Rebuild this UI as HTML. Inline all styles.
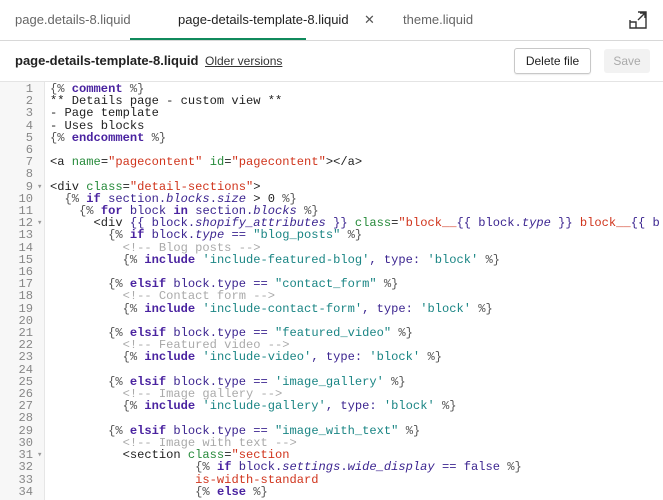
<!DOCTYPE html>
<html><head><meta charset="utf-8"><style>
body{margin:0;width:663px;height:500px;overflow:hidden;background:#fff;font-family:"Liberation Sans",sans-serif;position:relative}
.tabs{position:absolute;top:0;left:0;width:663px;height:40px;border-bottom:1px solid #d8d8d8}
.tab{position:absolute;top:12px;font-size:13px;color:#666}
.act{color:#222}
.ul{position:absolute;left:130px;width:176px;top:38px;height:2px;background:#108a5c}
.bar{position:absolute;top:41px;left:0;width:663px;height:40px;border-bottom:1px solid #e4e4e4}
.title{position:absolute;left:15px;top:12px;font-size:13px;color:#222;font-weight:bold}
.old{position:absolute;left:205px;top:13px;font-size:12px;color:#333;text-decoration:underline}
.btn{position:absolute;top:7px;height:24px;border-radius:3px;font-size:12px;line-height:24px;text-align:center}
.gut{position:absolute;top:82px;left:0;width:44px;height:418px;background:#f7f7f7;border-right:1px solid #e6e6e6}
.code{position:absolute;top:83px;left:0;font-family:"Liberation Mono",monospace;font-size:12.1px;line-height:12.2px;white-space:pre;color:#222}
.ln{display:inline-block;width:33px;text-align:right;color:#888;margin-right:17px;position:relative}
.f::after{content:"▾";position:absolute;left:37px;font-size:9px;color:#999}
.k{color:#4a23a0;font-weight:bold}.v{color:#3c2590}.i{font-style:italic}.s{color:#d0341c}.t{color:#1a8584}.a{color:#268a3a}.c{color:#aaa}.d{color:#555}
</style></head><body>
<div class="tabs">
<span class="tab" style="left:15px">page.details-8.liquid</span>
<span class="tab act" style="left:178px">page-details-template-8.liquid</span>
<span class="tab" style="left:364px;color:#555">✕</span>
<span class="tab" style="left:403px">theme.liquid</span>
<svg style="position:absolute;left:629px;top:11px" width="18" height="18" viewBox="0 0 18 18" fill="none" stroke="#333" stroke-width="1.4"><path d="M9 1H17V17H1V9"/><path d="M1 11H7V17"/><path d="M9 9L16 2M11 2H16V7"/></svg>
<div class="ul"></div>
</div>
<div class="bar">
<span class="title">page-details-template-8.liquid</span>
<span class="old">Older versions</span>
<div class="btn" style="left:514px;width:75px;border:1px solid #c8c8c8;color:#222;box-shadow:0 1px 1px rgba(0,0,0,.08)">Delete file</div>
<div class="btn" style="left:604px;width:46px;background:#f2f2f2;color:#aaa;top:8px">Save</div>
</div>
<div class="gut"></div>
<div class="code"><span class="ln">1</span><span class="d">{%</span> <span class="k">comment</span> <span class="d">%}</span>
<span class="ln">2</span>** Details page - custom view **
<span class="ln">3</span>- Page template
<span class="ln">4</span>- Uses blocks
<span class="ln">5</span><span class="d">{%</span> <span class="k">endcomment</span> <span class="d">%}</span>
<span class="ln">6</span>
<span class="ln">7</span>&lt;a <span class="a">name</span>=<span class="s">"pagecontent"</span> <span class="a">id</span>=<span class="s">"pagecontent"</span>&gt;&lt;/a&gt;
<span class="ln">8</span>
<span class="ln f">9</span>&lt;div <span class="a">class</span>=<span class="s">"detail-sections"</span>&gt;
<span class="ln">10</span>  <span class="d">{%</span> <span class="k">if</span> <span class="v">section.<span class="i">blocks</span>.<span class="i">size</span></span> &gt; 0 <span class="d">%}</span>
<span class="ln">11</span>    <span class="d">{%</span> <span class="k">for</span> <span class="v">block</span> <span class="k">in</span> <span class="v">section.<span class="i">blocks</span></span> <span class="d">%}</span>
<span class="ln f">12</span>      &lt;div <span class="v">{{ block.<span class="i">shopify_attributes</span> }}</span> <span class="a">class</span>=<span class="s">"block__</span><span class="v">{{ block.<span class="i">type</span> }}</span> <span class="s">block__</span><span class="v">{{ b</span>
<span class="ln">13</span>        <span class="d">{%</span> <span class="k">if</span> <span class="v">block.<span class="i">type</span> ==</span> <span class="t">"blog_posts"</span> <span class="d">%}</span>
<span class="ln">14</span>          <span class="c">&lt;!-- Blog posts --&gt;</span>
<span class="ln">15</span>          <span class="d">{%</span> <span class="k">include</span> <span class="t">'include-featured-blog'</span><span class="v">, type:</span> <span class="t">'block'</span> <span class="d">%}</span>
<span class="ln">16</span>
<span class="ln">17</span>        <span class="d">{%</span> <span class="k">elsif</span> <span class="v">block.type ==</span> <span class="t">"contact_form"</span> <span class="d">%}</span>
<span class="ln">18</span>          <span class="c">&lt;!-- Contact form --&gt;</span>
<span class="ln">19</span>          <span class="d">{%</span> <span class="k">include</span> <span class="t">'include-contact-form'</span><span class="v">, type:</span> <span class="t">'block'</span> <span class="d">%}</span>
<span class="ln">20</span>
<span class="ln">21</span>        <span class="d">{%</span> <span class="k">elsif</span> <span class="v">block.type ==</span> <span class="t">"featured_video"</span> <span class="d">%}</span>
<span class="ln">22</span>          <span class="c">&lt;!-- Featured video --&gt;</span>
<span class="ln">23</span>          <span class="d">{%</span> <span class="k">include</span> <span class="t">'include-video'</span><span class="v">, type:</span> <span class="t">'block'</span> <span class="d">%}</span>
<span class="ln">24</span>
<span class="ln">25</span>        <span class="d">{%</span> <span class="k">elsif</span> <span class="v">block.type ==</span> <span class="t">'image_gallery'</span> <span class="d">%}</span>
<span class="ln">26</span>          <span class="c">&lt;!-- Image gallery --&gt;</span>
<span class="ln">27</span>          <span class="d">{%</span> <span class="k">include</span> <span class="t">'include-gallery'</span><span class="v">, type:</span> <span class="t">'block'</span> <span class="d">%}</span>
<span class="ln">28</span>
<span class="ln">29</span>        <span class="d">{%</span> <span class="k">elsif</span> <span class="v">block.type ==</span> <span class="t">"image_with_text"</span> <span class="d">%}</span>
<span class="ln">30</span>          <span class="c">&lt;!-- Image with text --&gt;</span>
<span class="ln f">31</span>          &lt;section <span class="a">class</span>=<span class="s">"section</span>
<span class="ln">32</span>                    <span class="d">{%</span> <span class="k">if</span> <span class="v">block.<span class="i">settings</span>.<span class="i">wide_display</span> == false</span> <span class="d">%}</span>
<span class="ln">33</span>                    <span class="s">is-width-standard</span>
<span class="ln">34</span>                    <span class="d">{%</span> <span class="k">else</span> <span class="d">%}</span>
</div>
</body></html>
